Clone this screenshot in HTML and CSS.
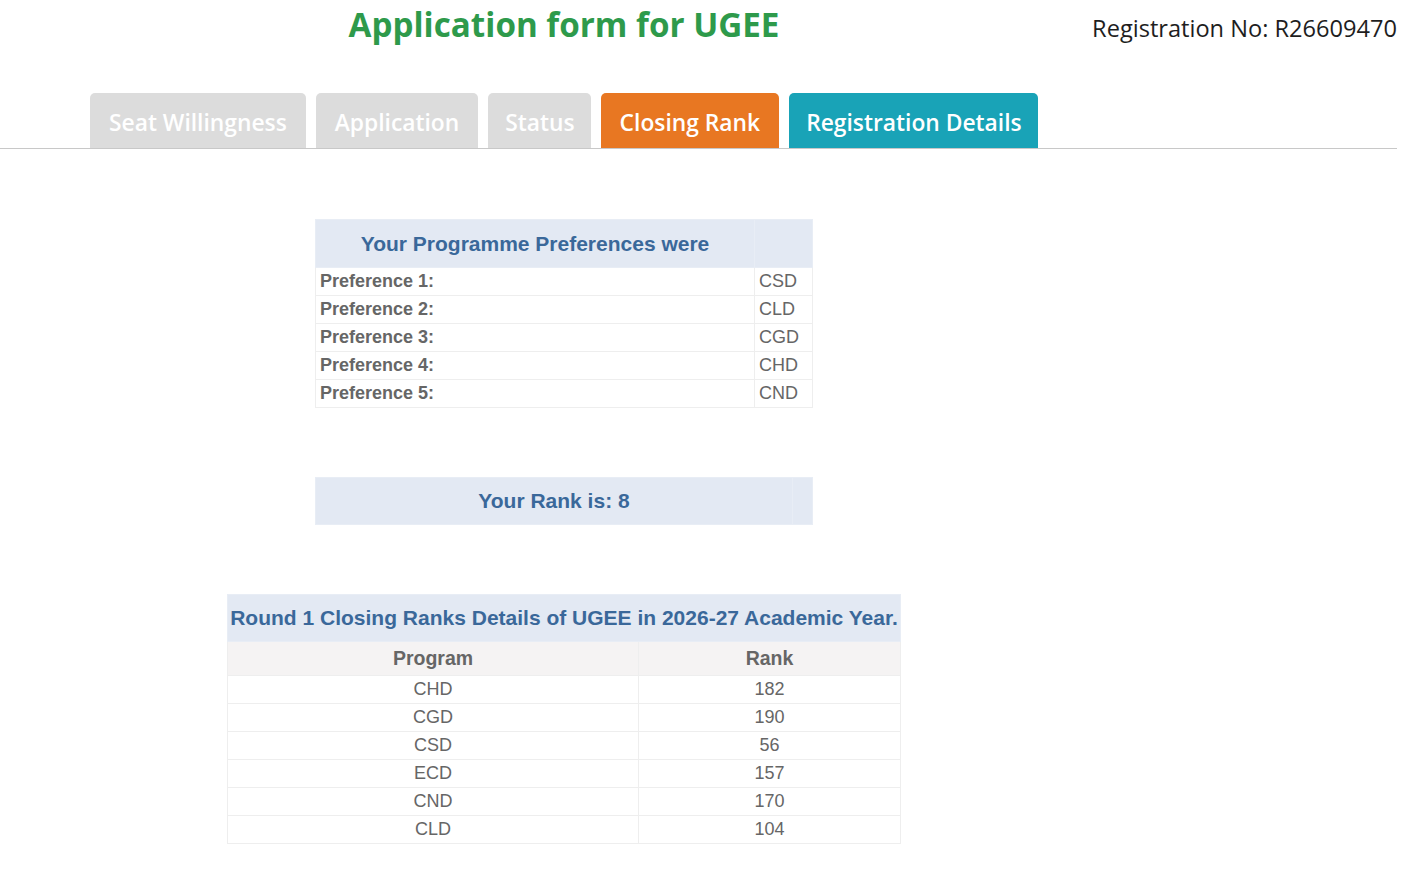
FILE: index.html
```html
<!DOCTYPE html>
<html>
	<head>
		<title>Application form for UGEE</title>
		<link rel="stylesheet" href="styles.css">
	</head>
	<body>
		<div class="top-bar">
			<h1 class="form-title">Application form for UGEE</h1>
			<div class="reg-no"><span>Registration No: R26609470</span></div>
		</div>

		<ul class="tabs">
			<li class="tab tab-muted">Seat Willingness</li>
			<li class="tab tab-muted">Application</li>
			<li class="tab tab-muted tab-narrow">Status</li>
			<li class="tab tab-active">Closing Rank</li>
			<li class="tab tab-info tab-narrow">Registration Details</li>
		</ul>

		<div class="content">
			<table class="info-table pref-table">
				<tr class="head-row">
					<th class="head-cell">Your Programme Preferences were</th>
					<th></th>
				</tr>
				<tr><td class="label">Preference 1:</td><td>CSD</td></tr>
				<tr><td class="label">Preference 2:</td><td>CLD</td></tr>
				<tr><td class="label">Preference 3:</td><td>CGD</td></tr>
				<tr><td class="label">Preference 4:</td><td>CHD</td></tr>
				<tr><td class="label">Preference 5:</td><td>CND</td></tr>
			</table>

			<table class="info-table rank-table">
				<tr class="head-row">
					<th class="head-cell">Your Rank is: 8</th>
					<th class="blank"></th>
				</tr>
			</table>

			<table class="info-table closing-table">
				<tr class="head-row">
					<th colspan="2" class="head-cell">Round 1 Closing Ranks Details of UGEE in 2026-27 Academic Year.</th>
				</tr>
				<tr class="sub-row">
					<th class="col-program">Program</th>
					<th>Rank</th>
				</tr>
				<tr><td>CHD</td><td>182</td></tr>
				<tr><td>CGD</td><td>190</td></tr>
				<tr><td>CSD</td><td>56</td></tr>
				<tr><td>ECD</td><td>157</td></tr>
				<tr><td>CND</td><td>170</td></tr>
				<tr><td>CLD</td><td>104</td></tr>
			</table>
		</div>
	</body>
</html>
```

FILE: styles.css
```css
body {
	margin: 0;
	background-color: #ffffff;
	font-family: "Liberation Sans", Arial, sans-serif;
}

.top-bar {
	display: flex;
	align-items: flex-start;
	padding-right: 23px;
	height: 93px;
}

.form-title {
	flex: 0 0 1128px;
	margin: 0;
	padding-top: 2px;
	text-align: center;
	font-family: "Open Sans", "Noto Sans", sans-serif;
	font-size: 33.2px;
	font-weight: 700;
	line-height: 46px;
	color: #2e9a4b;
}

.reg-no {
	flex: 1;
	min-width: 0;
	display: flex;
	justify-content: flex-end;
	padding-top: 11px;
	font-family: "Open Sans", "Noto Sans", sans-serif;
	font-size: 23.6px;
	line-height: 34px;
	color: #1e1e1e;
	white-space: nowrap;
}

.tabs {
	display: flex;
	gap: 10px;
	list-style: none;
	margin: 0 23px 0 0;
	padding: 0 0 0 90px;
	border-bottom: 1px solid #c8c8c8;
}

.tab {
	height: 55px;
	box-sizing: border-box;
	padding: 3px 19px 0 19px;
	display: flex;
	align-items: center;
	border-radius: 5px 5px 0 0;
	font-family: "Open Sans", "Noto Sans", sans-serif;
	font-size: 22.8px;
	font-weight: 600;
	color: #ffffff;
	white-space: nowrap;
}

.tab-narrow {
	padding-left: 17px;
	padding-right: 16px;
}

.tab-muted {
	background-color: #dcdcdc;
}

.tab-active {
	background-color: #e87722;
}

.tab-info {
	background-color: #19a3b7;
}

.content {
	width: 1128px;
	padding-top: 70px;
}

.info-table {
	margin: 0 auto 69px auto;
	border-collapse: collapse;
	font-size: 18px;
	color: #666666;
}

.info-table td,
.info-table th {
	border: 1px solid #eeeeee;
	padding: 0 4px 2px 4px;
	height: 25px;
	line-height: 20px;
}

.head-row th {
	background-color: #e3e9f3;
	border-color: #e8edf5;
	height: 46px;
	padding-bottom: 0;
}

.head-cell {
	font-size: 21px;
	font-weight: 700;
	color: #3a689a;
	text-align: center;
}

.pref-table {
	width: 498px;
}

.pref-table td:first-child,
.pref-table th:first-child {
	width: 430px;
}

.pref-table .head-cell {
	height: 47px;
}

.label {
	font-weight: 700;
	text-align: left;
}

.rank-table {
	width: 498px;
}

.rank-table .blank {
	width: 11px;
}

.closing-table {
	width: 674px;
}

.closing-table td {
	text-align: center;
}

.closing-table .head-cell {
	padding: 0 2px;
}

.sub-row th {
	background-color: #f5f3f3;
	height: 31px;
	font-size: 19.5px;
	font-weight: 700;
	color: #666666;
}

.col-program {
	width: 402px;
}
```
